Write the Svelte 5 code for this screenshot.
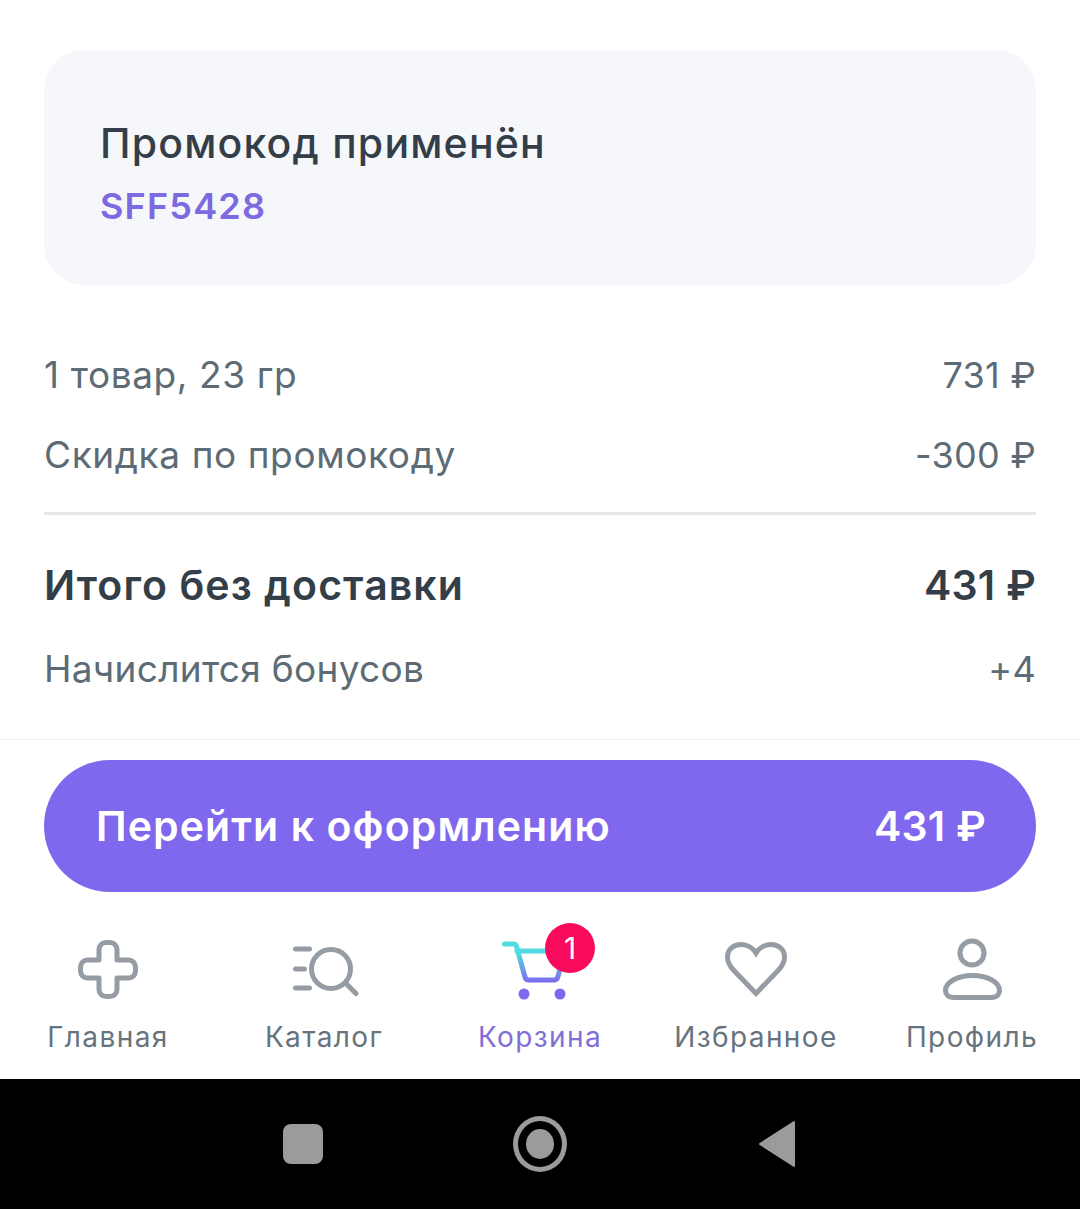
<script>
	const rows = [
		{ label: '1 товар, 23 гр', value: '731 ₽' },
		{ label: 'Скидка по промокоду', value: '-300 ₽' }
	];
</script>

<div class="screen">
	<main class="content">
		<section class="promo">
			<div class="promo-title">Промокод применён</div>
			<div class="promo-code">SFF5428</div>
		</section>

		<section class="summary">
			{#each rows as row}
				<div class="row">
					<span>{row.label}</span>
					<span class="num">{row.value}</span>
				</div>
			{/each}
		</section>

		<div class="divider"></div>

		<div class="total">
			<span>Итого без доставки</span>
			<span class="num">431 ₽</span>
		</div>
		<div class="row bonus">
			<span>Начислится бонусов</span>
			<span class="num">+4</span>
		</div>
	</main>

	<div class="checkout">
		<button class="checkout-btn">
			<span>Перейти к оформлению</span>
			<span class="num">431 ₽</span>
		</button>
	</div>

	<nav class="tabs">
		<div class="tab">
			<svg width="64" height="64" viewBox="0 0 64 64" fill="none" stroke="#969ca3" stroke-width="5" stroke-linejoin="round">
				<path d="M23 11.500a7 7 0 0 1 7-7h4a7 7 0 0 1 7 7V22h11.500a7 7 0 0 1 7 7v4a7 7 0 0 1-7 7H41v11.500a7 7 0 0 1-7 7h-4a7 7 0 0 1-7-7V40H11.500a7 7 0 0 1-7-7v-4a7 7 0 0 1 7-7H23z" />
			</svg>
			<span>Главная</span>
		</div>
		<div class="tab">
			<svg width="70" height="64" viewBox="0 0 70 64" fill="none" stroke="#969ca3" stroke-width="5" stroke-linecap="round">
				<path d="M6.500 11h14M6.500 31h9M6.500 50h14" />
				<circle cx="42" cy="31" r="19.500" />
				<path d="M57 45.500l10 10" />
			</svg>
			<span>Каталог</span>
		</div>
		<div class="tab active">
			<div class="cart">
				<svg width="80" height="64" viewBox="0 0 80 64" fill="none">
					<defs>
						<linearGradient id="cartGrad" gradientUnits="userSpaceOnUse" x1="0" y1="3" x2="0" y2="45">
							<stop offset="0" stop-color="#4fdce0" />
							<stop offset="0.3" stop-color="#52d9e2" />
							<stop offset="1" stop-color="#8068ee" />
						</linearGradient>
					</defs>
					<path d="M4.500 6h9c1.500 0 2.500 1 3 2.500L25 39c.5 1.800 1.500 3 3.500 3H54c2 0 3.200-1 3.800-3L62 24M17 13h34" stroke="url(#cartGrad)" stroke-width="5" stroke-linecap="round" stroke-linejoin="round" />
					<circle cx="24" cy="56" r="5.500" fill="#8068ee" />
					<circle cx="60" cy="56" r="5.500" fill="#8068ee" />
				</svg>
				<span class="badge">1</span>
			</div>
			<span>Корзина</span>
		</div>
		<div class="tab">
			<svg width="64" height="64" viewBox="0 0 64 64" fill="none" stroke="#969ca3" stroke-width="5" stroke-linejoin="miter">
				<path d="M32 55.500L9 31.500C5 27 3.500 23 3.500 19 3.500 11.500 9.500 6.500 17 6.500 23 6.500 29 10 32 15 35 10 41 6.500 47 6.500 54.500 6.500 60.500 11.500 60.500 19 60.500 23 59 27 55 31.500z" />
			</svg>
			<span>Избранное</span>
		</div>
		<div class="tab">
			<svg width="64" height="64" viewBox="0 0 64 64" fill="none" stroke="#969ca3" stroke-width="5">
				<circle cx="32" cy="15" r="12" />
				<path d="M14 59.500C8 59.500 5.500 56.500 5.500 52.500 5.500 44 18 37.500 32.500 37.500S59.500 44 59.500 52.500C59.500 56.500 57 59.500 51 59.500z" stroke-linejoin="round" />
			</svg>
			<span>Профиль</span>
		</div>
	</nav>

	<footer class="sysbar">
		<span class="sys-square"></span>
		<span class="sys-circle"><span></span></span>
		<svg class="sys-back" width="38" height="48" viewBox="0 0 38 48">
			<path d="M36 2v44L2 24z" fill="#9b9b9b" stroke="#9b9b9b" stroke-width="2" stroke-linejoin="round" />
		</svg>
	</footer>
</div>

<style>
	:global(body) {
		margin: 0;
		background: #fff;
	}

	.screen {
		width: 1080px;
		height: 1209px;
		display: flex;
		flex-direction: column;
		font-family: 'Inter', 'Noto Sans', sans-serif;
		color: #5c6b75;
		overflow: hidden;
	}

	.content {
		padding: 50px 44px 0;
		height: 740px;
		box-sizing: border-box;
		border-bottom: 1px solid #f1f2f4;
	}

	.promo {
		height: 235px;
		box-sizing: border-box;
		padding: 66px 56px 0;
		background: #f5f7fb;
		border-radius: 40px;
	}

	.promo-title {
		font-size: 41px;
		line-height: 54px;
		font-weight: 500;
		letter-spacing: 1.2px;
		color: #333e48;
	}

	.promo-code {
		margin-top: 9px;
		font-size: 36px;
		line-height: 54px;
		font-weight: 600;
		letter-spacing: 1.2px;
		color: #7d69e0;
	}

	.summary {
		margin-top: 65px;
		display: flex;
		flex-direction: column;
		gap: 30px;
	}

	.row {
		display: flex;
		justify-content: space-between;
		font-size: 37px;
		line-height: 50px;
		letter-spacing: 0.6px;
	}

	.row .num {
		font-size: 36px;
		letter-spacing: 0.3px;
	}

	.divider {
		height: 3px;
		margin-top: 32px;
		background: #e4e6ea;
	}

	.total {
		margin-top: 45px;
		display: flex;
		justify-content: space-between;
		font-size: 41px;
		line-height: 50px;
		font-weight: 600;
		letter-spacing: 1.1px;
		color: #333e48;
	}

	.total .num,
	.checkout-btn .num {
		letter-spacing: 0.2px;
	}

	.bonus {
		margin-top: 34px;
		letter-spacing: 0.3px;
	}

	.checkout {
		padding: 20px 44px 0;
	}

	.checkout-btn {
		width: 100%;
		height: 132px;
		padding: 0 50px 0 52px;
		display: flex;
		align-items: center;
		justify-content: space-between;
		border: none;
		border-radius: 66px;
		background: #8068ee;
		color: #fff;
		font-family: inherit;
		font-size: 41px;
		font-weight: 600;
		letter-spacing: 1.1px;
	}

	.tabs {
		height: 187px;
		box-sizing: border-box;
		padding-top: 46px;
		display: flex;
		align-items: flex-start;
	}

	.tab {
		width: 216px;
		display: flex;
		flex-direction: column;
		align-items: center;
		font-size: 28px;
		line-height: 40px;
		letter-spacing: 1.4px;
		color: #66737c;
		white-space: nowrap;
	}

	.tab svg {
		display: block;
		margin-bottom: 15px;
	}

	.tab.active {
		color: #7f6fd6;
	}

	.cart {
		position: relative;
	}

	.badge {
		position: absolute;
		top: -15px;
		left: 45px;
		width: 50px;
		height: 50px;
		border-radius: 50%;
		background: #f80a5d;
		color: #fff;
		font-size: 30px;
		line-height: 50px;
		text-align: center;
		letter-spacing: 0;
	}

	.sysbar {
		flex: 1;
		background: #000;
		display: flex;
		align-items: center;
		padding-left: 283px;
	}

	.sys-square {
		width: 40px;
		height: 40px;
		border-radius: 8px;
		background: #9b9b9b;
	}

	.sys-circle {
		margin-left: 190px;
		width: 44px;
		height: 46px;
		border: 5px solid #9b9b9b;
		border-radius: 50%;
		display: flex;
		align-items: center;
		justify-content: center;
	}

	.sys-circle span {
		width: 28px;
		height: 30px;
		border-radius: 50%;
		background: #9b9b9b;
	}

	.sys-back {
		margin-left: 191px;
	}
</style>
